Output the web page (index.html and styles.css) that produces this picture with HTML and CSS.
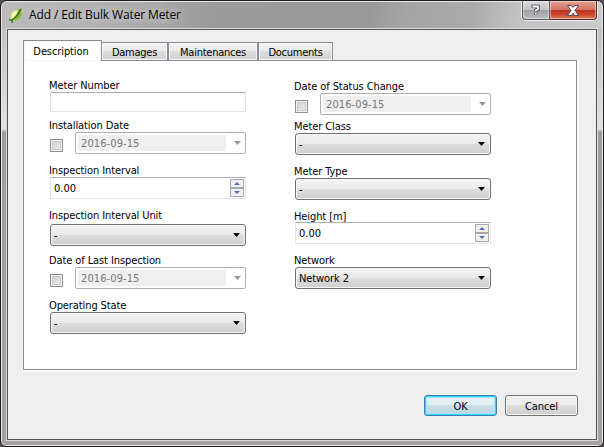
FILE: index.html
```html
<!DOCTYPE html>
<html lang="en">
<head>
<meta charset="utf-8">
<title>Add / Edit Bulk Water Meter</title>
<link rel="stylesheet" href="styles.css">
</head>
<body>
<div class="window">
  <header class="titlebar">
    <svg class="app-icon" width="16" height="16" viewBox="0 0 16 16">
      <path d="M7 2 Q1 4 1.5 10 Q2 13 6 13 Q11 12 11.5 7 L14 2 Z" fill="#dfe987"/>
      <path d="M9 1.5 L12.5 .5 L12.5 7 Q11 12 5 13.5 Q8 8 9 1.5Z" fill="#8fba40"/>
      <path d="M0 12 L3 12 L3.5 15" fill="none" stroke="#3f7a32" stroke-width="1.5"/>
      <path d="M3 12 Q8 9 12 1" fill="none" stroke="#2b6b22" stroke-width="1.5"/>
      <path d="M3.5 9.5 Q4 5.5 8 3.5" fill="none" stroke="#fbffd2" stroke-width="1.6"/>
    </svg>
    <h1 class="title">Add / Edit Bulk Water Meter</h1>
    <div class="caption">
      <button class="cap help" aria-label="Help"><svg width="10" height="12" viewBox="0 0 10 12"><path d="M2.3 4 V2.5 H7 V5.2 L4.8 6.3 V7.5 M4.8 8.7 V10.5" fill="none" stroke="#4d5160" stroke-width="3.6"/><path d="M2.3 3.5 V2.5 H7 V5 L4.8 6.3 V7.3 M4.8 8.8 V10.2" fill="none" stroke="#fff" stroke-width="1.8"/></svg></button>
      <button class="cap close" aria-label="Close"><svg width="12" height="11" viewBox="0 0 12 11"><path d="M.5 .5 H4.4 L6 2.5 L7.6 .5 H11.5 L8 5.5 L11.5 10.5 H7.6 L6 8.3 L4.4 10.5 H.5 L4 5.5 Z" fill="#fff" stroke="#54485a"/></svg></button>
    </div>
  </header>
  <main class="client">
    <nav class="tabs">
      <button class="tab active">Description</button>
      <button class="tab damages">Damages</button>
      <button class="tab maintenances">Maintenances</button>
      <button class="tab documents">Documents</button>
    </nav>
    <section class="panel">
      <div class="column">
        <div class="field"><label>Meter Number</label><div class="text"></div></div>
        <div class="field gap-s"><label>Installation Date</label><div class="date-row"><i class="check"></i><div class="date"><span>2016-09-15</span><i class="arrow"></i></div></div></div>
        <div class="field gap-m"><label>Inspection Interval</label><div class="spin">0.00<div class="steps"><i class="step up"></i><i class="step down"></i></div></div></div>
        <div class="field gap-m tall"><label>Inspection Interval Unit</label><div class="combo">-<i class="arrow"></i></div></div>
        <div class="field gap-x"><label>Date of Last Inspection</label><div class="date-row"><i class="check"></i><div class="date"><span>2016-09-15</span><i class="arrow"></i></div></div></div>
        <div class="field gap-m"><label>Operating State</label><div class="combo">-<i class="arrow"></i></div></div>
      </div>
      <div class="column second">
        <div class="field"><label>Date of Status Change</label><div class="date-row"><i class="check"></i><div class="date"><span>2016-09-15</span><i class="arrow"></i></div></div></div>
        <div class="field gap-t"><label>Meter Class</label><div class="combo">-<i class="arrow"></i></div></div>
        <div class="field gap-m"><label>Meter Type</label><div class="combo">-<i class="arrow"></i></div></div>
        <div class="field gap-m short"><label>Height [m]</label><div class="spin">0.00<div class="steps"><i class="step up"></i><i class="step down"></i></div></div></div>
        <div class="field gap-m"><label>Network</label><div class="combo">Network 2<i class="arrow"></i></div></div>
      </div>
    </section>
    <footer class="actions">
      <button class="btn primary">OK</button>
      <button class="btn">Cancel</button>
    </footer>
  </main>
</div>
</body>
</html>
```
FILE: styles.css
```css
* { box-sizing: border-box; }
body {
  margin: 0;
  width: 604px;
  height: 447px;
  overflow: hidden;
  background: #55504f;
  color: #000;
  font: 11px/15px "DejaVu Sans Condensed", "DejaVu Sans", sans-serif;
  font-stretch: condensed;
  letter-spacing: -0.1px;
}
button { font: inherit; letter-spacing: inherit; color: inherit; margin: 0; padding: 0; border: 0; }
.window {
  width: 604px;
  height: 447px;
  border: 1px solid #1d1a1d;
  border-radius: 7px 7px 6px 6px;
  padding: 0 6px 6px;
  box-shadow: inset 0 0 0 1px #e9e7e8;
  background:
    linear-gradient(100deg, #bcbaba 0, #b1b0b0 110px, #9b9b9b 210px, #999 365px, #a5a5a5 400px, #aaa 465px, #c2c2c2 510px, #cbcbcb 604px) 0 0 / 100% 28px no-repeat,
    linear-gradient(#c3c0c1 28px, #e5e2e3 128px, #9f9d9e 131px, #a3a1a2);
}
.titlebar { height: 28px; display: flex; align-items: flex-start; padding-left: 2px; }
.app-icon { margin-top: 7px; }
.title {
  margin: 4px 0 0 4px;
  font: 12px/20px "Open Sans", "Noto Sans", sans-serif;
  letter-spacing: -0.12px;
  text-shadow: 0 0 6px #d8d8d8, 0 0 10px #ccc;
  white-space: nowrap;
}
.caption {
  margin-left: auto;
  margin-right: -1px;
  display: flex;
  width: 77px;
  height: 20px;
  border: 1px solid #f0f0f0;
  border-top: 0;
  border-radius: 0 0 5px 5px;
}
.cap {
  display: flex;
  align-items: center;
  justify-content: center;
  height: 19px;
  border: 1px solid #56565c;
  border-top: 0;
  box-shadow: inset 0 0 0 1px rgba(255,255,255,.45);
}
.help { width: 28px; border-radius: 0 0 0 4px; background: linear-gradient(#dadada, #c3c3c6 48%, #9d9da1 50%, #bebec2); }
.close { width: 47px; border-left: 0; border-color: #5a2925; border-radius: 0 0 4px; background: linear-gradient(#e4a293, #d27362 48%, #b93320 50%, #c9442b 75%, #de8060); }
.client {
  height: 411px;
  padding: 10px 18px 0 15px;
  border: 1px solid #555354;
  outline: 1px solid #dedcdd;
  background: #efefef;
}
.tabs { position: relative; display: flex; align-items: flex-end; height: 21px; margin-bottom: -1px; letter-spacing: -0.25px; }
.tab {
  height: 19px;
  padding-top: 1px;
  border: 1px solid #898c95;
  border-left-width: 0;
  background: linear-gradient(#f3f3f3, #ebebeb 48%, #ddd 50%, #d0d0d0);
  box-shadow: inset 0 0 0 1px #f6f6f6;
}
.tab.active { width: 79px; height: 21px; padding-right: 3px; border-left-width: 1px; border-bottom: 0; background: #fff; letter-spacing: -0.1px; }
.damages { width: 66px; }
.maintenances { width: 90px; border-left: 1px solid #898c95; }
.documents { width: 75px; border-left: 1px solid #898c95; }
.panel {
  display: flex;
  gap: 49px;
  width: 554px;
  height: 310px;
  padding: 16px 0 0 26px;
  border: 1px solid #898c95;
  box-shadow: 1px 1px 0 1px #fafafa;
  background: #fff;
}
.column { width: 196px; }
.second { padding-top: 1px; }
.gap-t { margin-top: 3px; }
.gap-s { margin-top: 5px; }
.gap-x { margin-top: 6px; }
.gap-m { margin-top: 8px; }
label { display: block; height: 15px; margin-left: -1px; line-height: 17px; white-space: nowrap; }
.tall label { height: 17px; }
.short label { height: 14px; }
.text, .spin {
  height: 20px;
  border: 1px solid #e2e3ea;
  border-top-color: #abadb3;
  border-radius: 1px;
  background: #fff;
}
.spin { height: 22px; display: flex; justify-content: space-between; padding: 0 1px 0 3px; line-height: 21px; letter-spacing: 0; }
.steps { width: 14px; height: 18px; margin-top: 1px; }
.step { display: flex; justify-content: center; align-items: center; height: 9px; border: 1px solid #a9a9ad; background: #f0f0f0; }
.step::after { content: ""; width: 6px; height: 3px; background: #566fb4; }
.up::after { clip-path: polygon(50% 0, 100% 100%, 0 100%); }
.down::after { clip-path: polygon(0 0, 100% 0, 50% 100%); }
.combo {
  display: flex;
  justify-content: space-between;
  align-items: center;
  height: 22px;
  padding: 0 5px 0 3px;
  border: 1px solid #707070;
  border-radius: 3px;
  background: linear-gradient(#f2f2f2, #ebebeb 48%, #ddd 50%, #cfcfcf);
  box-shadow: inset 0 0 0 1px #f8f8f8;
}
.arrow { width: 7px; height: 4px; background: #000; clip-path: polygon(0 0, 100% 0, 50% 100%); }
.date-row { display: flex; gap: 12px; height: 22px; }
.check { width: 13px; height: 13px; margin-top: 7px; border: 1px solid #8e8f8f; background: linear-gradient(135deg, #c5cad0, #f4f4f4); box-shadow: inset 0 0 0 1px #f4f4f4, inset 0 0 0 2px #c8cbd0; }
.date { display: flex; align-items: center; width: 171px; border: 1px solid #afafaf; border-radius: 2px; padding: 0 4px 0 2px; }
.date span { flex: 1; height: 16px; margin-right: 8px; padding-left: 3px; line-height: 17px; background: #efefef; color: #787878; letter-spacing: 0.1px; }
.date .arrow { background: #999; }
.actions { display: flex; justify-content: flex-end; gap: 8px; margin-top: 25px; }
.btn {
  width: 73px;
  height: 21px;
  padding-top: 1px;
  border: 1px solid #707070;
  border-radius: 3px;
  background: linear-gradient(#f2f2f2, #ebebeb 48%, #ddd 50%, #cfcfcf);
  box-shadow: inset 0 0 0 1px #f8f8f8;
}
.primary { border-color: #3c7fb1; background: linear-gradient(#ecf4f8, #e0edf3 48%, #c9dfea 50%, #bad5e4); box-shadow: inset 0 0 0 1px #38d1f8, inset 0 0 0 2px #a5e3f5; }
```
